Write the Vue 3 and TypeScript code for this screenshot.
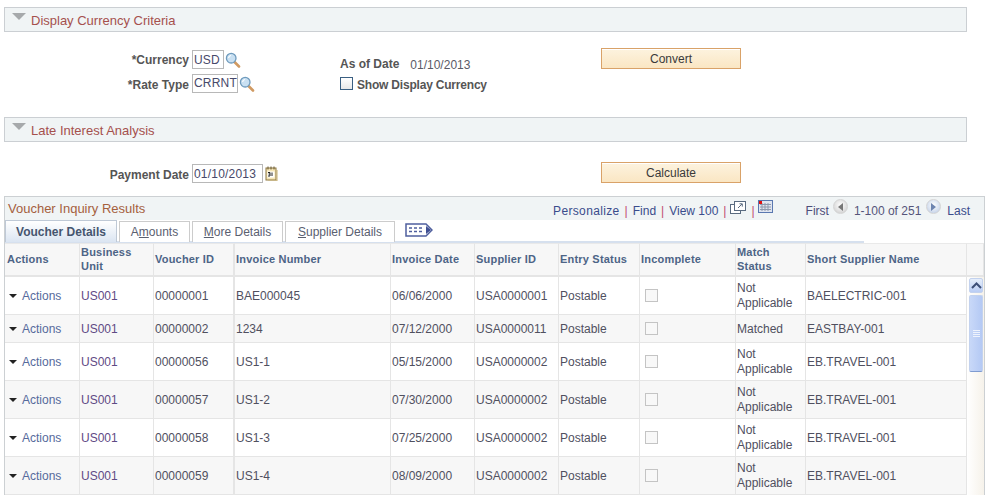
<script setup lang="ts">
interface Row {
  id: string; inv: string; date: string; sup: string; status: string; match: string; name: string; tall: boolean;
}
const rows: Row[] = [
  { id: '00000001', inv: 'BAE000045', date: '06/06/2000', sup: 'USA0000001', status: 'Postable', match: 'Not Applicable', name: 'BAELECTRIC-001', tall: true },
  { id: '00000002', inv: '1234', date: '07/12/2000', sup: 'USA0000011', status: 'Postable', match: 'Matched', name: 'EASTBAY-001', tall: false },
  { id: '00000056', inv: 'US1-1', date: '05/15/2000', sup: 'USA0000002', status: 'Postable', match: 'Not Applicable', name: 'EB.TRAVEL-001', tall: true },
  { id: '00000057', inv: 'US1-2', date: '07/30/2000', sup: 'USA0000002', status: 'Postable', match: 'Not Applicable', name: 'EB.TRAVEL-001', tall: true },
  { id: '00000058', inv: 'US1-3', date: '07/25/2000', sup: 'USA0000002', status: 'Postable', match: 'Not Applicable', name: 'EB.TRAVEL-001', tall: true },
  { id: '00000059', inv: 'US1-4', date: '08/09/2000', sup: 'USA0000002', status: 'Postable', match: 'Not Applicable', name: 'EB.TRAVEL-001', tall: true },
];
const widths = [75, 74, 81, 156, 84, 84, 81, 96, 70, 161, 17];
</script>

<template>
  <div class="page">
    <div class="bar">
      <span class="tri"></span>
      <span class="bar-title">Display Currency Criteria</span>
    </div>
    <div class="form criteria">
      <label class="lbl r1">*Currency</label>
      <div class="inp-wrap r1">
        <span class="inp w-usd">USD</span>
        <svg class="mag" width="16" height="16" viewBox="0 0 16 16">
          <path d="M9 9.500l5 5" stroke="#d09a62" stroke-width="2.600" stroke-linecap="round" />
          <circle cx="6.200" cy="6.200" r="4.800" fill="#c9e0f2" stroke="#6f9bbd" stroke-width="1.300" />
          <path d="M3.600 6a2.800 2.800 0 0 1 2.400-2.500" fill="none" stroke="#fff" stroke-width="1.200" />
        </svg>
      </div>
      <div class="asof r1">
        <span class="lbl">As of Date</span>
        <span class="val">01/10/2013</span>
      </div>
      <button class="btn r1" type="button">Convert</button>

      <label class="lbl r2">*Rate Type</label>
      <div class="inp-wrap r2">
        <span class="inp w-rate">CRRNT</span>
        <svg class="mag" width="16" height="16" viewBox="0 0 16 16">
          <path d="M9 9.500l5 5" stroke="#d09a62" stroke-width="2.600" stroke-linecap="round" />
          <circle cx="6.200" cy="6.200" r="4.800" fill="#c9e0f2" stroke="#6f9bbd" stroke-width="1.300" />
          <path d="M3.600 6a2.800 2.800 0 0 1 2.400-2.500" fill="none" stroke="#fff" stroke-width="1.200" />
        </svg>
      </div>
      <div class="show r2">
        <span class="chk"></span>
        <span class="lbl">Show Display Currency</span>
      </div>
    </div>

    <div class="bar">
      <span class="tri"></span>
      <span class="bar-title">Late Interest Analysis</span>
    </div>
    <div class="form payment">
      <label class="lbl pay-l">Payment Date</label>
      <div class="inp-wrap">
        <span class="inp w-date">01/10/2013</span>
        <svg class="cal" width="13" height="15" viewBox="0 0 13 15">
          <rect x="1" y="2" width="10" height="12" fill="#f5e6b8" stroke="#8a7440" />
          <path d="M12 4v11H3" fill="none" stroke="#c8b070" />
          <path d="M3 0.500v3M6 0.500v3M9 0.500v3" stroke="#6b5a30" />
          <rect x="2.500" y="5.500" width="7" height="6" fill="#fff" />
          <path d="M3 6.500h2v1.500H3.500M5 8v2H3M7 6.500v3.500" fill="none" stroke="#222" />
        </svg>
      </div>
      <span></span>
      <button class="btn" type="button">Calculate</button>
    </div>

    <div class="grid">
      <div class="grid-head">
        <span class="grid-title">Voucher Inquiry Results</span>
        <nav class="pager">
          <a class="wide">Personalize</a><i>|</i><a>Find</a><i>|</i><a>View 100</a><i>|</i>
          <svg class="zoom-ic" width="16" height="15" viewBox="0 0 16 15">
            <rect x="0.500" y="4.500" width="10" height="9" fill="#fff" stroke="#5a6b80" />
            <rect x="4.500" y="1.500" width="11" height="9" fill="#fff" stroke="#5a6b80" />
            <path d="M8 8l4-4M9.500 3.800h2.800v2.800" fill="none" stroke="#5a6b80" />
          </svg>
          <i>|</i>
          <svg class="dl-ic" width="15" height="13" viewBox="0 0 15 13">
            <rect x="0.500" y="0.500" width="14" height="12" fill="#dfe4ef" stroke="#5a78b0" />
            <path d="M2 4.500h11M2 7h11M2 9.500h11M4 3v8M7 3v8M10 3v8" stroke="#8d99ad" />
            <rect x="1" y="1" width="3" height="3" fill="#e01010" />
          </svg>
          <span class="first">First</span>
          <span class="round"><b class="arr-l"></b></span>
          <span class="range">1-100 of 251</span>
          <span class="round blue"><b class="arr-r"></b></span>
          <a class="last">Last</a>
        </nav>
      </div>
      <div class="tabs">
        <span class="tab active">Voucher Details</span>
        <span class="tab t2">A<u>m</u>ounts</span>
        <span class="tab t3"><u>M</u>ore Details</span>
        <span class="tab t4"><u>S</u>upplier Details</span>
        <svg class="tab-ic" width="28" height="14" viewBox="0 0 28 14">
          <path d="M1 1h20l6 6-6 6H1z" fill="#fff" stroke="#4f5f9e" stroke-width="1.500" />
          <path d="M4 5h3M9 5h3M14 5h3M4 8.500h3M9 8.500h3M14 8.500h3" stroke="#4f5f9e" stroke-width="1.300" />
          <path d="M21 3l5 4-5 4z" fill="#3f4f92" />
        </svg>
      </div>
      <table class="tbl">
        <colgroup>
          <col v-for="(w, i) in widths" :key="i" :style="{ width: w + 'px' }" />
        </colgroup>
        <thead>
          <tr>
            <th class="first-col">Actions</th><th>Business Unit</th><th class="thick">Voucher ID</th><th>Invoice Number</th>
            <th>Invoice Date</th><th>Supplier ID</th><th>Entry Status</th><th>Incomplete</th>
            <th>Match Status</th><th>Short Supplier Name</th><th></th>
          </tr>
        </thead>
        <tbody>
          <tr v-for="(r, i) in rows" :key="r.id" :class="[r.tall ? 'tall' : 'short', i % 2 ? 'odd' : 'even']">
            <td class="act"><span class="caret"></span><a>Actions</a></td>
            <td class="bu">US001</td>
            <td class="thick">{{ r.id }}</td>
            <td>{{ r.inv }}</td>
            <td>{{ r.date }}</td>
            <td>{{ r.sup }}</td>
            <td>{{ r.status }}</td>
            <td class="cb"><span class="chk off"></span></td>
            <td class="match">{{ r.match }}</td>
            <td>{{ r.name }}</td>
            <td v-if="i === 0" rowspan="6" class="sb-cell">
              <div class="sb">
                <div class="sb-up">
                  <svg width="11" height="7" viewBox="0 0 11 7"><path d="M1 6l4.500-4.500L10 6" fill="none" stroke="#3d4f78" stroke-width="2" /></svg>
                </div>
                <div class="sb-thumb"><span></span><span></span><span></span><span></span></div>
              </div>
            </td>
          </tr>
        </tbody>
      </table>
    </div>
  </div>
</template>

<style>
html, body { margin: 0; background: #fff; overflow: hidden; }
</style>

<style scoped>
.page {
  height: 497px;
  overflow: hidden;
  padding: 7px 0 0 4px;
  box-sizing: border-box;
  font: 12px/15px "Liberation Sans", Arial, sans-serif;
  color: #444;
}
.bar {
  width: 963px;
  height: 25px;
  box-sizing: border-box;
  border: 1px solid #cbcfd3;
  background: #f0f4f5;
  display: flex;
  align-items: center;
}
.tri {
  width: 0;
  height: 0;
  border-left: 7px solid transparent;
  border-right: 7px solid transparent;
  border-top: 7px solid #a6a9ab;
  margin: -7px 0 0 7px;
}
.bar-title { margin: 1px 0 0 5px; color: #a5504d; font-size: 13px; }
.form {
  display: grid;
  grid-template-columns: 185px 151px 261px 140px;
}
.criteria {
  height: 85px;
  box-sizing: border-box;
  padding-top: 16px;
  grid-template-rows: 26px 25px;
}
.payment {
  height: 54px;
  box-sizing: border-box;
  padding-top: 20px;
  grid-template-rows: 21px;
}
.r1 { grid-row: 1; }
.r2 { grid-row: 2; }
.lbl { font-weight: bold; color: #555; white-space: nowrap; }
label.lbl { text-align: right; margin-top: 5px; }
label.r2 { margin-top: 4px; }
label.pay-l { margin-top: 6px; }
.inp-wrap { display: flex; align-items: flex-start; padding-left: 3px; }
.r1.inp-wrap { padding-top: 2px; }
.inp {
  height: 19px;
  box-sizing: border-box;
  border: 1px solid #b8b8b8;
  padding: 1px 0 0 1px;
  background: #fff;
  color: #47496a;
  font-size: 12px;
  letter-spacing: 0.2px;
  overflow: hidden;
}
.r1 .inp, .payment .inp { padding-top: 2px; }
.payment .inp-wrap { padding-top: 2px; }
.w-usd { width: 32px; }
.w-rate { width: 46px; }
.w-date { width: 71px; }
.mag { margin: 2px 0 0 1px; }
.cal { margin: 2px 0 0 2px; }
.asof { margin-top: 9px; display: flex; }
.val { margin: 1px 0 0 11px; color: #5a5a66; }
.show { display: flex; align-items: center; height: 19px; }
.show .lbl { padding-top: 4px; letter-spacing: -0.2px; }
.chk {
  width: 13px;
  height: 13px;
  box-sizing: border-box;
  border: 1px solid #3a5f82;
  background: linear-gradient(#fff, #e8e8e8);
  margin-right: 4px;
  display: inline-block;
}
.chk.off { border-color: #c4c4c4; background: #f8f8f8; margin: 0; }
.btn {
  width: 140px;
  height: 21px;
  box-sizing: border-box;
  border: 1px solid #d9a268;
  background: linear-gradient(#fdf3df, #fae6c3);
  font: 12px/15px "Liberation Sans", Arial, sans-serif;
  color: #3a3a3a;
  padding: 2px 0 0;
  box-shadow: inset 0 1px 0 #fff;
}
.grid {
  width: 981px;
  box-sizing: border-box;
  border: 1px solid #ccd0d3;
  border-bottom: 0;
}
.grid-head {
  height: 23px;
  background: #f0f4f5;
  display: flex;
  justify-content: space-between;
  padding-left: 3px;
  box-sizing: border-box;
}
.grid-title { color: #a5603e; line-height: 23px; font-size: 13px; }
.pager {
  display: flex;
  align-items: flex-start;
  height: 23px;
  box-sizing: border-box;
  padding: 7px 14px 0 0;
  color: #4a5a8a;
}
.pager a { color: #3a4c8c; }
.pager a.wide { letter-spacing: 0.35px; }
.pager i { color: #c04a70; font-style: normal; margin: 0 5px; }
.zoom-ic { margin: -4px 0 0 -1px; }
.dl-ic { margin: -4px 0 0 -2px; }
.first { margin-left: 33px; color: #4d4d7a; }
.range { color: #55557a; margin: 0 5px 0 6px; }
.round {
  width: 15px;
  height: 15px;
  margin: -5px 0 0 4px;
  border-radius: 50%;
  background: radial-gradient(circle at 50% 40%, #fff, #c9c9c9);
  border: 1px solid #d4d4d4;
  box-sizing: border-box;
  display: flex;
  align-items: center;
  justify-content: center;
}
.round.blue { background: radial-gradient(circle at 50% 40%, #fff, #b8c9e4); margin: -5px 6px 0 0; }
.arr-l { border: 4px solid transparent; border-left: 0; border-right: 5px solid #777; }
.arr-r { border: 4px solid transparent; border-right: 0; border-left: 5px solid #6d84b0; }
.tabs {
  height: 23px;
  box-sizing: border-box;
  display: flex;
  align-items: flex-start;
  background: linear-gradient(#d6e0ee, #d6e0ee) no-repeat 0 21px / 859px 2px;
}
.tab {
  height: 21px;
  margin-top: 1px;
  box-sizing: border-box;
  border: 1px solid #ccc;
  border-bottom: 0;
  color: #5a6070;
  background: #fff;
  text-align: center;
  line-height: 20px;
  margin-left: 2px;
}
.tab.active {
  width: 112px;
  height: 22px;
  margin: 0;
  font-weight: bold;
  color: #45556f;
  line-height: 22px;
  background: linear-gradient(#fff, #dbe5f2);
  border-color: #bfc9d6;
}
.t2 { width: 71px; }
.t3 { width: 91px; }
.t4 { width: 110px; }
.tab-ic { margin: 3px 0 0 10px; }
.tbl {
  table-layout: fixed;
  width: 979px;
  border-collapse: separate;
  border-spacing: 0;
}
th {
  height: 34px;
  padding: 0 1px 2px 1px;
  box-sizing: border-box;
  font-weight: bold;
  font-size: 11px;
  line-height: 14px;
  color: #4d6486;
  background: #f7f7f7;
  text-align: left;
  border-top: 1px solid #e9e9e9;
  border-right: 1px solid #e5e5e5;
  border-bottom: 2px solid #e5e5e5;
  letter-spacing: 0.2px;
}
th.first-col { padding-left: 2px; }
td {
  padding: 2px 0 0 1px;
  box-sizing: border-box;
  color: #50505f;
  border-right: 1px solid #e5e5e5;
  border-bottom: 1px solid #e5e5e5;
  white-space: nowrap;
  vertical-align: middle;
}
.tall td { height: 38px; }
.short td { height: 28px; }
.odd td { background: #f7f7f7; }
.even td { background: #fff; }
th.thick, td.thick { border-right-width: 2px; }
td.act { padding-left: 4px; }
.act a { color: #566a9c; }
.caret {
  display: inline-block;
  border-left: 4px solid transparent;
  border-right: 4px solid transparent;
  border-top: 4px solid #222;
  margin: 0 5px 2px 0;
}
td.bu { color: #5f4a85; }
td.cb { padding: 0 0 0 5px; }
.cb .chk { display: block; }
td.match { white-space: normal; line-height: 15px; padding-right: 4px; }
.tall td.match { padding-top: 0; }
td.sb-cell {
  padding: 0;
  vertical-align: top;
  background: linear-gradient(90deg, #fff, #f6f2ea);
  border-right: 0;
  border-bottom: 0;
}
.sb { display: flex; flex-direction: column; padding: 1px 1px 0 2px; gap: 2px; }
.sb-up {
  height: 15px;
  box-sizing: border-box;
  border: 1px solid #c3d2ee;
  border-radius: 2px;
  background: linear-gradient(#e6eefb, #b9cdf5);
  display: flex;
  align-items: center;
  justify-content: center;
}
.sb-thumb {
  height: 77px;
  box-sizing: border-box;
  border: 1px solid #c3d2ee;
  border-bottom: 1px solid #7f9bd0;
  border-radius: 2px;
  background: linear-gradient(90deg, #c8d8f8, #b4c9f4);
  display: flex;
  flex-direction: column;
  align-items: center;
  justify-content: center;
  gap: 1px;
}
.sb-thumb span { width: 7px; height: 1px; background: #eef3fd; }
</style>
